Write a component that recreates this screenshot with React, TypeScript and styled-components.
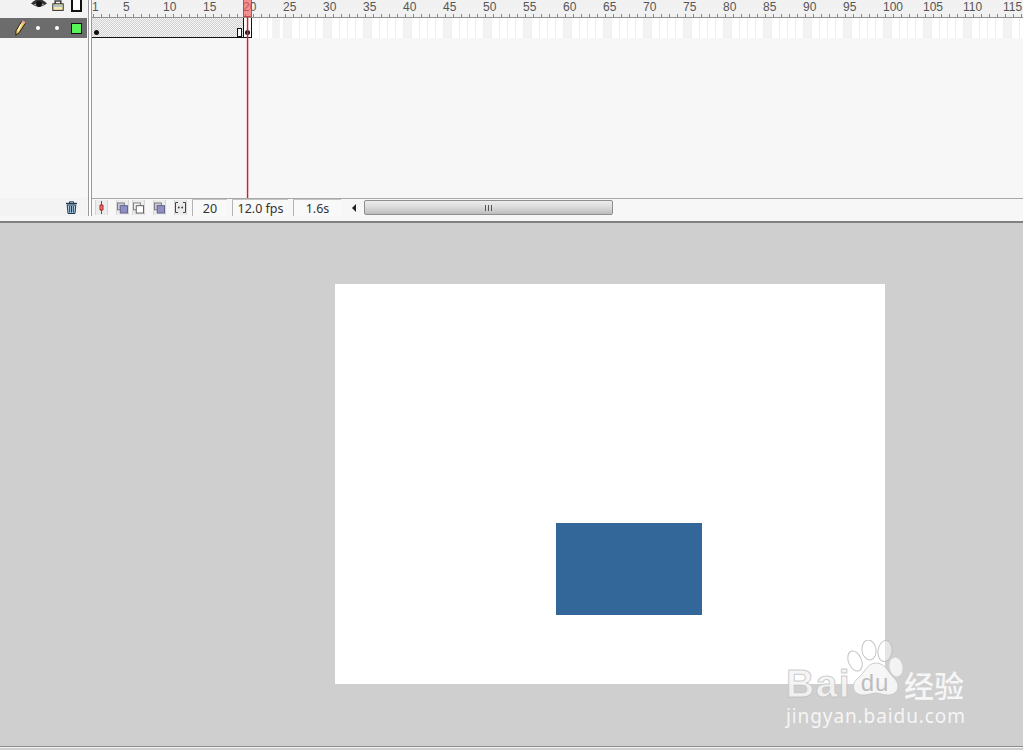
import React from 'react';
import styled, { createGlobalStyle } from 'styled-components';

const FRAME = 8;
const LABELS = [1, ...Array.from({ length: 23 }, (_, i) => (i + 1) * 5)];

const Global = createGlobalStyle`
	html, body {
		margin: 0;
		padding: 0;
		overflow: hidden;
		background: #cfcfcf;
	}
`;

const Page = styled.div`
	position: relative;
	width: 1023px;
	height: 750px;
	display: flex;
	flex-direction: column;
	overflow: hidden;
	font-family: 'Noto Sans', 'Liberation Sans', sans-serif;
`;

const Timeline = styled.div`
	position: relative;
	height: 221px;
	flex-shrink: 0;
	display: flex;
	flex-direction: column;
	background: #f7f7f7;
	border-bottom: 2px solid #808080;
	box-sizing: content-box;
`;

const Upper = styled.div`
	height: 198px;
	display: flex;
`;

const LayerColumn = styled.div`
	width: 87px;
	flex-shrink: 0;
	display: flex;
	flex-direction: column;
`;

const LayerHeader = styled.div`
	height: 18px;
	display: flex;
	align-items: flex-start;
	padding-left: 31px;
	gap: 5px;
	box-sizing: border-box;
	background: #f2f2f2;
	overflow: hidden;
`;

const LayerRow = styled.div`
	height: 20px;
	display: flex;
	align-items: center;
	background: #6c6c6c;
	box-sizing: border-box;
	padding-left: 15px;
`;

const LayerDot = styled.span`
	width: 4px;
	height: 4px;
	border-radius: 50%;
	background: #fff;
	margin-left: ${(p: { $gap: number }) => p.$gap}px;
`;

const Swatch = styled.span`
	width: 9px;
	height: 9px;
	margin-left: 12px;
	border: 1px solid #111;
	background: #57f55a;
`;

const OutlineBox = styled.span`
	width: 7px;
	height: 10px;
	margin-top: -2px;
	margin-left: 2px;
	border: 2px solid #111;
	background: #fff;
`;

const Divider = styled.div`
	width: 4px;
	flex-shrink: 0;
	box-sizing: border-box;
	margin-left: 1px;
	border-left: 1px solid #9a9a9a;
	border-right: 1px solid #9a9a9a;
	background: #fff;
`;

const Frames = styled.div`
	flex: 1;
	min-width: 0;
	display: flex;
	flex-direction: column;
	overflow: hidden;
`;

const Ruler = styled.div`
	height: 18px;
	flex-shrink: 0;
	display: flex;
	box-sizing: border-box;
	background-color: #f1f1f1;
	border-bottom: 1px solid #8f8f8f;
	background-image: repeating-linear-gradient(
		90deg,
		#888 0,
		#888 1px,
		transparent 1px,
		transparent ${FRAME}px
	);
	background-size: 100% 3px;
	background-position: 1px 14px;
	background-repeat: no-repeat;
`;

const RulerLabel = styled.span`
	flex-shrink: 0;
	width: ${(p: { $first: boolean }) => (p.$first ? 31 : 40)}px;
	font-family: 'Liberation Sans', sans-serif;
	font-size: 12px;
	line-height: 14px;
	height: 14px;
	color: #555;
	white-space: nowrap;
`;

const Track = styled.div`
	height: 20px;
	flex-shrink: 0;
	display: flex;
	box-sizing: border-box;
`;

const Tween = styled.div`
	width: 151px;
	flex-shrink: 0;
	box-sizing: border-box;
	display: flex;
	align-items: center;
	padding: 9px 1px 0 2px;
	border-bottom: 1px solid #111;
	background-color: #fff;
	background-image: repeating-conic-gradient(#d0d0d0 0 25%, #f6f6f6 0 50%);
	background-size: 2px 2px;
`;

const KeyDot = styled.span`
	width: 5px;
	height: 5px;
	border-radius: 50%;
	background: #111;
`;

const EndMark = styled.span`
	width: 3px;
	height: 7px;
	margin-left: auto;
	border: 1px solid #111;
	background: #fff;
`;

const KeyFrame = styled.div`
	width: 9px;
	flex-shrink: 0;
	box-sizing: border-box;
	display: flex;
	align-items: center;
	justify-content: center;
	padding-top: 9px;
	border-left: 1px solid #111;
	border-right: 1px solid #111;
	border-bottom: 1px solid #111;
	background: #fff;
`;

const EmptyCells = styled.div`
	flex: 1;
	background-color: #fff;
	background-image: repeating-linear-gradient(
			90deg,
			transparent 0,
			transparent 7px,
			#efefef 7px,
			#efefef 8px
		),
		repeating-linear-gradient(
			90deg,
			#f3f3f3 0,
			#f3f3f3 8px,
			transparent 8px,
			transparent 40px
		);
	background-position: 0 0, 31px 0;
`;

const Playhead = styled.div`
	position: absolute;
	left: 243px;
	top: 0;
	width: 9px;
	height: 198px;
	display: flex;
	flex-direction: column;
	align-items: center;
	pointer-events: none;
`;

const PlayheadCap = styled.div`
	width: 9px;
	height: 17px;
	flex-shrink: 0;
	box-sizing: border-box;
	background: rgba(245, 95, 95, 0.68);
	border: 1px solid rgba(190, 50, 50, 0.75);
	border-top: none;
`;

const PlayheadLine = styled.div`
	width: 1px;
	flex: 1;
	background: #e0182a;
	box-shadow: 1px 0 0 rgba(225, 70, 80, 0.35), -1px 0 0 rgba(225, 70, 80, 0.2);
`;

const StatusBar = styled.div`
	height: 18px;
	flex-shrink: 0;
	display: flex;
	align-items: stretch;
`;

const TrashSlot = styled.div`
	width: 87px;
	flex-shrink: 0;
	display: flex;
	align-items: center;
	justify-content: flex-end;
	padding-right: 9px;
	box-sizing: border-box;
	background: #f3f3f3;
`;

const StatusBody = styled.div`
	flex: 1;
	display: flex;
	align-items: center;
	border-top: 1px solid #a8a8a8;
	background: #f7f7f7;
`;

const ToolButton = styled.span`
	width: 13px;
	height: 15px;
	box-sizing: border-box;
	flex-shrink: 0;
	display: flex;
	align-items: center;
	justify-content: center;
	margin-left: ${(p: { $m: number }) => p.$m}px;
	background: #ececec;
	border-left: 1px solid #d6d6d6;
	border-right: 1px solid #d6d6d6;
`;

const Readout = styled.span`
	flex-shrink: 0;
	box-sizing: border-box;
	height: 17px;
	width: ${(p: { $w: number; $m: number }) => p.$w}px;
	margin-left: ${(p: { $w: number; $m: number }) => p.$m}px;
	display: flex;
	align-items: center;
	justify-content: center;
	font-size: 12.5px;
	color: #333;
	border-left: 1px solid #b4b4b4;
	border-top: 1px solid #c4c4c4;
	background: #f9f9f9;
`;

const ScrollArrow = styled.span`
	width: 0;
	height: 0;
	margin-left: 11px;
	border-top: 4px solid transparent;
	border-bottom: 4px solid transparent;
	border-right: 4px solid #222;
`;

const ScrollThumb = styled.div`
	width: 249px;
	height: 15px;
	margin-left: 8px;
	box-sizing: border-box;
	display: flex;
	align-items: center;
	justify-content: center;
	gap: 1px;
	border: 1px solid #8e8e8e;
	border-radius: 2px;
	background: linear-gradient(#ececec, #dcdcdc 45%, #bdbdbd);
`;

const Grip = styled.i`
	width: 1px;
	height: 6px;
	margin-right: 1px;
	background: #555;
`;

const Stage = styled.div`
	position: relative;
	flex: 1;
	background: #cfcfcf;
	padding: 61px 0 0 335px;
`;

const Canvas = styled.div`
	position: relative;
	width: 550px;
	height: 400px;
	background: #fff;
`;

const BlueRect = styled.div`
	position: absolute;
	left: 221px;
	top: 239px;
	width: 146px;
	height: 92px;
	background: #336699;
`;

const BottomEdge = styled.div`
	position: absolute;
	left: 0;
	right: 0;
	bottom: 3px;
	height: 1px;
	background: #8c8c8c;
	box-shadow: 0 1px 0 #f2f2f2;
`;

const Watermark = styled.div`
	position: absolute;
	left: 786px;
	top: 640px;
	width: 190px;
	color: rgba(255, 255, 255, 0.82);
	pointer-events: none;
`;

const LogoRow = styled.div`
	height: 60px;
	display: flex;
	align-items: flex-end;
`;

const BaiText = styled.span`
	width: 59px;
	flex-shrink: 0;
	font-family: 'Liberation Sans', sans-serif;
	font-size: 39px;
	line-height: 39px;
	font-weight: 700;
	letter-spacing: 1.5px;
	margin-bottom: -3px;
	color: rgba(244, 244, 244, 0.92);
	-webkit-text-stroke: 1px rgba(190, 190, 190, 0.75);
`;

const CnText = styled.span`
	font-family: 'Noto Sans CJK SC', sans-serif;
	font-size: 30px;
	line-height: 34px;
	font-weight: 500;
	margin-left: -1px;
	margin-bottom: -1px;
	white-space: nowrap;
`;

const SiteText = styled.div`
	margin-top: 5px;
	font-family: 'Noto Sans', sans-serif;
	font-size: 19px;
	line-height: 22px;
	letter-spacing: 0.9px;
	white-space: nowrap;
`;

const Pencil = () => (
	<svg width="11" height="16" viewBox="0 0 11 16">
		<path d="M7 0.8 L10.4 3 L4.2 12.6 L0.8 15.2 L1 10.8 Z" fill="#f3cf6a" stroke="#2b2210" strokeWidth="1" />
		<path d="M7 1.2 L10 3.1" stroke="#e4a0a0" strokeWidth="2" />
		<path d="M6 4.6 L2.8 10.8" stroke="#fff6d0" strokeWidth="1.2" />
	</svg>
);

const Eye = () => (
	<svg width="16" height="9" viewBox="0 0 16 9">
		<path d="M0 3.5 Q8 -5 16 3.5 Q8 10 0 3.5 Z" fill="#333" />
		<path d="M2.5 4.5 Q8 1.5 13.5 4.5 Q8 8 2.5 4.5 Z" fill="#a8a8a8" />
		<circle cx="8" cy="4" r="3" fill="#111" />
	</svg>
);

const Lock = () => (
	<svg width="12" height="11" viewBox="0 0 12 11">
		<path d="M3.2 5 V1 H8.8 V5" fill="none" stroke="#444" strokeWidth="1.6" />
		<rect x="0.8" y="3.8" width="10.4" height="6.6" fill="#f6e8ae" stroke="#2c2c2c" />
		<path d="M1.8 6 H10.2" stroke="#8fb6d6" strokeWidth="1.4" />
	</svg>
);

const Trash = () => (
	<svg width="13" height="13" viewBox="0 0 13 13">
		<path d="M1 2.5 H12" stroke="#1d3a55" strokeWidth="1.4" />
		<path d="M4.5 2 V0.8 H8.5 V2" fill="none" stroke="#1d3a55" />
		<path d="M2.2 4 H10.8 L10 12.5 H3 Z" fill="#b4d0e6" stroke="#1d3a55" />
		<path d="M4.7 5 V11.5 M6.5 5 V11.5 M8.3 5 V11.5" stroke="#1d3a55" strokeWidth="1" />
	</svg>
);

const CenterFrame = () => (
	<svg width="9" height="13" viewBox="0 0 9 13">
		<path d="M4.5 0 V13" stroke="#c0272d" />
		<path d="M3 4 H6 V9 H3 Z" fill="#e07a7a" stroke="#b32025" />
	</svg>
);

const Onion = ({ filled }: { filled: boolean }) => (
	<svg width="12" height="12" viewBox="0 0 12 12">
		<rect x="0.5" y="0.5" width="7.5" height="7.5" fill={filled ? '#c8c8d8' : '#f4f4f4'} stroke="#777" />
		<rect x="3.5" y="3.5" width="8" height="8" fill={filled ? '#8f8fc6' : '#fff'} stroke={filled ? '#5f5f85' : '#555'} />
	</svg>
);

const ModifyMarkers = () => (
	<svg width="11" height="11" viewBox="0 0 11 11" fill="none" stroke="#444">
		<path d="M3 0.5 H0.5 V10.5 H3 M8 0.5 H10.5 V10.5 H8" />
		<circle cx="3.8" cy="5.5" r="0.9" fill="#333" stroke="none" />
		<circle cx="7.2" cy="5.5" r="0.9" fill="#333" stroke="none" />
	</svg>
);

const Paw = () => (
	<svg width="60" height="60" viewBox="0 0 60 60" style={{ flexShrink: 0 }}>
		<g fill="rgba(255,255,255,0.45)" stroke="rgba(190,190,190,0.9)" strokeWidth="1">
			<ellipse cx="10" cy="21" rx="6.5" ry="10.5" transform="rotate(-22 10 21)" />
			<ellipse cx="24" cy="10" rx="7" ry="10" transform="rotate(-8 24 10)" />
			<ellipse cx="40" cy="11" rx="7" ry="10.5" transform="rotate(8 40 11)" />
		</g>
		<ellipse cx="51" cy="27" rx="6.5" ry="9.5" transform="rotate(-12 51 27)" fill="#f3f3f3" />
		<path
			d="M31 23 C40 23 43 32 49 38 C57 46 52 55 43 55 C38 55 35 53 31 53 C27 53 24 55 18 55 C9 55 5 46 12 39 C20 33 22 23 31 23 Z"
			fill="rgba(246,246,246,0.94)"
			stroke="rgba(195,195,195,0.8)"
		/>
		<text x="30" y="51" textAnchor="middle" fontFamily="Liberation Sans, sans-serif" fontSize="24" letterSpacing="1" fill="#bdbdbd">
			du
		</text>
	</svg>
);

const App = () => {
	return (
		<Page>
			<Global />
			<Timeline>
				<Upper>
					<LayerColumn>
						<LayerHeader>
							<Eye />
							<Lock />
							<OutlineBox />
						</LayerHeader>
						<LayerRow>
							<Pencil />
							<LayerDot $gap={10} />
							<LayerDot $gap={15} />
							<Swatch />
						</LayerRow>
					</LayerColumn>
					<Divider />
					<Frames>
						<Ruler>
							{LABELS.map((n, i) => (
								<RulerLabel key={n} $first={i === 0}>
									{n}
								</RulerLabel>
							))}
						</Ruler>
						<Track>
							<Tween>
								<KeyDot />
								<EndMark />
							</Tween>
							<KeyFrame>
								<KeyDot />
							</KeyFrame>
							<EmptyCells />
						</Track>
					</Frames>
				</Upper>
				<StatusBar>
					<TrashSlot>
						<Trash />
					</TrashSlot>
					<Divider />
					<StatusBody>
						<ToolButton $m={3}>
							<CenterFrame />
						</ToolButton>
						<ToolButton $m={8}>
							<Onion filled />
						</ToolButton>
						<ToolButton $m={3}>
							<Onion filled={false} />
						</ToolButton>
						<ToolButton $m={8}>
							<Onion filled />
						</ToolButton>
						<ToolButton $m={8}>
							<ModifyMarkers />
						</ToolButton>
						<Readout $w={35} $m={5}>20</Readout>
						<Readout $w={56} $m={5}>12.0 fps</Readout>
						<Readout $w={48} $m={5}>1.6s</Readout>
						<ScrollArrow />
						<ScrollThumb>
							<Grip />
							<Grip />
							<Grip />
						</ScrollThumb>
					</StatusBody>
				</StatusBar>
				<Playhead>
					<PlayheadCap />
					<PlayheadLine />
				</Playhead>
			</Timeline>
			<Stage>
				<Canvas>
					<BlueRect />
				</Canvas>
			</Stage>
			<BottomEdge />
			<Watermark>
				<LogoRow>
					<BaiText>Bai</BaiText>
					<Paw />
					<CnText>经验</CnText>
				</LogoRow>
				<SiteText>jingyan.baidu.com</SiteText>
			</Watermark>
		</Page>
	);
};

export default App;
